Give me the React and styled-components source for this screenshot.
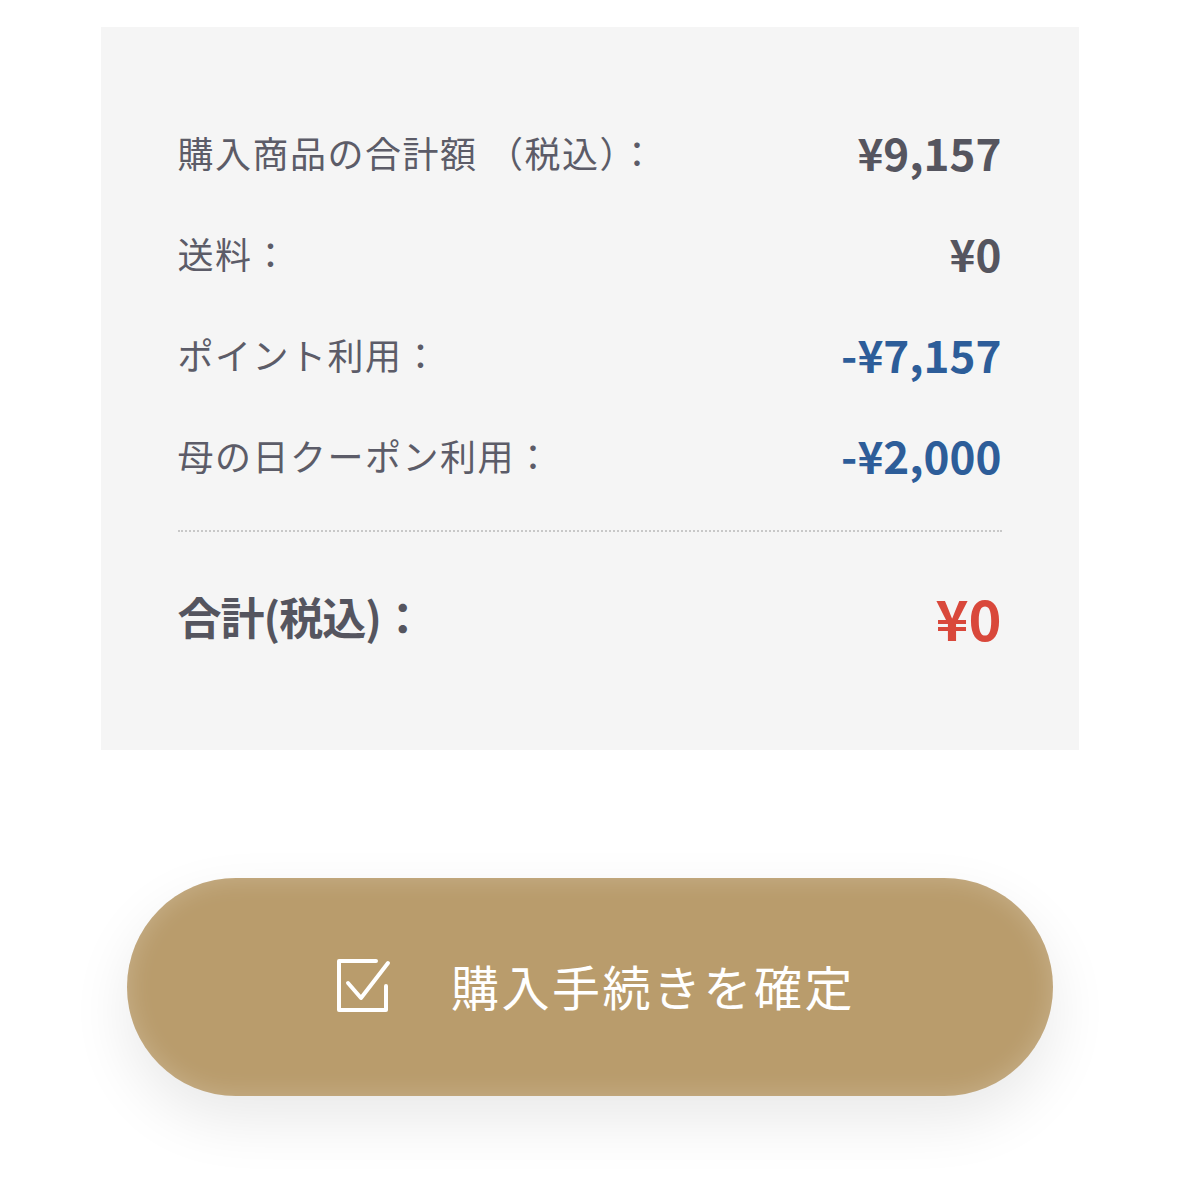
import React from "react";
import styled, { createGlobalStyle } from "styled-components";

const GlobalStyle = createGlobalStyle`
    body {
        margin: 0;
        background: #fff;
        font-family: "Noto Sans CJK JP", "Noto Sans", sans-serif;
    }
`

const Page = styled.div`
    width: 1179px;
    height: 1179px;
    padding-top: 27px;
    box-sizing: border-box;
    display: flex;
    flex-direction: column;
    align-items: center;
`

const Summary = styled.div`
    width: 978px;
    box-sizing: border-box;
    background: #f5f5f5;
    padding: 74px 77px 84px;
    display: flex;
    flex-direction: column;
`

const Row = styled.div`
    height: 101px;
    display: flex;
    align-items: center;
    justify-content: space-between;
`

const Label = styled.span`
    font-size: 36px;
    letter-spacing: 1.5px;
    color: #5c5c68;
`

const Amount = styled.span`
    font-size: 44px;
    font-weight: 700;
    color: ${(props) => props.color || "#55555f"};
`

const Divider = styled.div`
    border-top: 2px dotted #c8c8c8;
    margin: 25px 0 34px;
`

const TotalRow = styled(Row)`
    height: 100px;
`

const TotalLabel = styled.span`
    font-size: 44px;
    font-weight: 700;
    color: #55555f;
    letter-spacing: -1px;
`

const TotalAmount = styled.span`
    font-size: 56px;
    font-weight: 700;
    color: #d9483b;
`

const ConfirmButton = styled.button`
    margin-top: 128px;
    width: 926px;
    height: 218px;
    border: none;
    border-radius: 109px;
    background: #b99c6c;
    box-shadow: inset 0 0 26px rgba(255, 255, 255, 0.22), 0 24px 60px rgba(0, 0, 0, 0.09);
    display: flex;
    align-items: center;
    justify-content: center;
    gap: 60px;
    padding: 0 0 4px 12px;
    font-family: inherit;
    color: #fff;
    font-size: 48px;
    letter-spacing: 2.5px;
`

const CheckIcon = () => (
    <svg width="55" height="55" viewBox="0 0 55 55" fill="none" stroke="#fff" strokeWidth="4" strokeLinecap="round" strokeLinejoin="round">
        <path d="M40 3 H3 V52 H50 V28" />
        <path d="M12 25 L25 40 L52 5" />
    </svg>
)

const rows = [
    { label: "購入商品の合計額 （税込）：", value: "¥9,157" },
    { label: "送料：", value: "¥0" },
    { label: "ポイント利用：", value: "-¥7,157", color: "#2d5d99" },
    { label: "母の日クーポン利用：", value: "-¥2,000", color: "#2d5d99" },
]

const App = () => {
    return (
        <Page>
            <GlobalStyle />
            <Summary>
                {rows.map((r) => (
                    <Row key={r.label}>
                        <Label>{r.label}</Label>
                        <Amount color={r.color}>{r.value}</Amount>
                    </Row>
                ))}
                <Divider />
                <TotalRow>
                    <TotalLabel>合計(税込)：</TotalLabel>
                    <TotalAmount>¥0</TotalAmount>
                </TotalRow>
            </Summary>
            <ConfirmButton>
                <CheckIcon />
                <span>購入手続きを確定</span>
            </ConfirmButton>
        </Page>
    )
}

export default App
